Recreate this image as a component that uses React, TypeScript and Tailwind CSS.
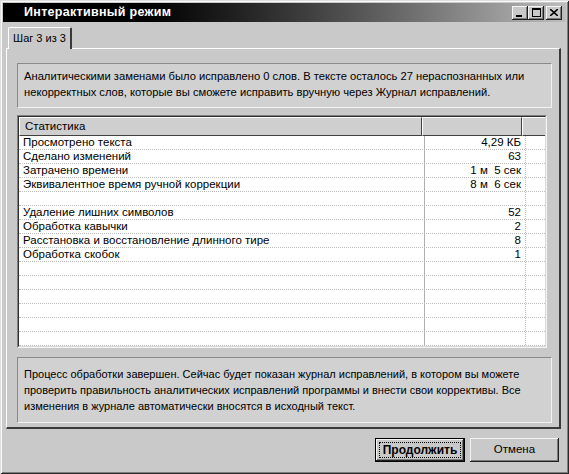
import React from "react";

const rows: [string, string][] = [
  ["Просмотрено текста", "4,29 КБ"],
  ["Сделано изменений", "63"],
  ["Затрачено времени", "1 м  5 сек"],
  ["Эквивалентное время ручной коррекции", "8 м  6 сек"],
  ["", ""],
  ["Удаление лишних символов", "52"],
  ["Обработка кавычки", "2"],
  ["Расстановка и восстановление длинного тире", "8"],
  ["Обработка скобок", "1"],
  ["", ""],
  ["", ""],
  ["", ""],
  ["", ""],
  ["", ""],
  ["", ""],
];

function TitleButton({ children, className = "" }: { children: React.ReactNode; className?: string }) {
  return (
    <div
      className={`w-[16px] h-[14px] bg-[#c9c9c9] flex items-center justify-center shadow-[inset_-1px_-1px_#202020,inset_1px_1px_#f4f4f4,inset_-2px_-2px_#7a7a7a] ${className}`}
    >
      {children}
    </div>
  );
}

export default function App() {
  return (
    <div
      className="w-[569px] h-[474px] bg-[#c9c9c9] p-[3px] flex flex-col shadow-[inset_1px_1px_#dedede,inset_-1px_-1px_#2a2a2a,inset_2px_2px_#fafafa,inset_-2px_-2px_#7d7d7d]"
      style={{ fontFamily: '"Liberation Sans", Arial, sans-serif' }}
    >
      {/* Title bar */}
      <div className="h-[19px] flex items-center bg-linear-to-r from-black from-15% to-[#bdbdbd] pl-[21px] pr-[4px]">
        <span className="text-white font-bold text-[12.5px] leading-none tracking-[0.3px]">Интерактивный режим</span>
        <div className="ml-auto flex items-center">
          <TitleButton>
            <svg width="8" height="8" viewBox="0 0 8 8" className="mt-[1px]">
              <rect x="0" y="6" width="6" height="2" fill="#000" />
            </svg>
          </TitleButton>
          <TitleButton>
            <svg width="9" height="9" viewBox="0 0 9 9">
              <rect x="0.5" y="0.5" width="8" height="8" fill="none" stroke="#000" />
              <rect x="0" y="0" width="9" height="2" fill="#000" />
            </svg>
          </TitleButton>
          <TitleButton className="ml-[2px]">
            <svg width="8" height="7" viewBox="0 0 8 7">
              <path d="M0 0 L8 7 M8 0 L0 7" stroke="#000" strokeWidth="1.6" />
            </svg>
          </TitleButton>
        </div>
      </div>

      {/* Tabs */}
      <div className="mt-[5px] ml-[5px] h-[21px] flex relative z-10">
        <div className="w-[64px] h-[22px] bg-[#c9c9c9] border-t border-l border-white border-r-2 border-r-[#3a3a3a] rounded-t-[2px] flex items-center justify-center text-[11px] text-black">
          Шаг 3 из 3
        </div>
      </div>

      {/* Panel */}
      <div className="ml-[3px] w-[555px] h-[381px] border-t border-l border-white border-r-2 border-b-2 border-r-[#3a3a3a] border-b-[#3a3a3a] flex flex-col">
        {/* Info box 1 */}
        <div className="mt-[14px] ml-[10px] w-[535px] h-[45px] bg-[#d1d1d1] border border-t-[#8a8a8a] border-l-[#8a8a8a] border-r-[#f2f2f2] border-b-[#f2f2f2] pl-[6px] pt-[4px] text-[11.2px] leading-[16px] text-black whitespace-nowrap">
          <div>Аналитическими заменами было исправлено 0 слов. В тексте осталось 27 нераспознанных или</div>
          <div>некорректных слов, которые вы сможете исправить вручную через Журнал исправлений.</div>
        </div>

        {/* Table */}
        <div className="mt-[7px] ml-[10px] w-[530px] h-[233px] border border-t-[#7f7f7f] border-l-[#7f7f7f] border-r-[#f4f4f4] border-b-[#f4f4f4]">
          <div className="w-full h-full bg-white border border-t-[#303030] border-l-[#303030] border-r-[#d8d8d8] border-b-[#d8d8d8] flex flex-col overflow-hidden">
            <div className="h-[19px] flex text-[11.5px] text-black">
              <div className="w-[406px] h-full bg-[#cfcfcf] border-t border-l border-white border-r border-b border-r-[#404040] border-b-[#404040] flex items-center pl-[5px]">
                Статистика
              </div>
              <div className="w-[101px] h-full bg-[#cfcfcf] border-t border-l border-white border-r border-b border-r-[#404040] border-b-[#404040]" />
              <div className="w-[23px] h-full bg-[#cfcfcf] border-t border-l border-white border-b border-b-[#404040]" />
            </div>
            {rows.map(([a, b], i) => (
              <div key={i} className="h-[14px] shrink-0 flex text-[11.5px] leading-[13px] text-black border-b border-dotted border-[#bdbdbd]">
                <div className="w-[406px] h-full border-r border-[#b0b0b0] pl-[4px] whitespace-nowrap">{a}</div>
                <div className="w-[101px] h-full border-r border-dotted border-[#bdbdbd] pr-[4px] text-right whitespace-pre">{b}</div>
                <div className="flex-1" />
              </div>
            ))}
          </div>
        </div>

        {/* Info box 2 */}
        <div className="mt-[9px] ml-[10px] w-[535px] h-[66px] bg-[#d1d1d1] border border-t-[#8a8a8a] border-l-[#8a8a8a] border-r-[#f2f2f2] border-b-[#f2f2f2] pl-[6px] pt-[8px] text-[11px] leading-[16px] text-black whitespace-nowrap">
          <div>Процесс обработки завершен. Сейчас будет показан журнал исправлений, в котором вы можете</div>
          <div>проверить правильность аналитических исправлений программы и внести свои коррективы. Все</div>
          <div>изменения в журнале автоматически вносятся в исходный текст.</div>
        </div>
      </div>

      {/* Buttons */}
      <div className="mt-[9px] flex justify-end pr-[7px] gap-[5px]">
        <div className="w-[90px] h-[24px] border border-black bg-[#c9c9c9] shadow-[inset_-1px_-1px_#202020,inset_1px_1px_#f4f4f4,inset_-2px_-2px_#7a7a7a] flex items-center justify-center p-[3px]">
          <div className="w-full h-full border border-dotted border-black flex items-center justify-center text-[12px] font-bold text-black">
            Продолжить
          </div>
        </div>
        <div className="w-[89px] h-[24px] bg-[#c9c9c9] shadow-[inset_-1px_-1px_#202020,inset_1px_1px_#f4f4f4,inset_-2px_-2px_#7a7a7a] flex items-center justify-center text-[11.5px] text-black">
          Отмена
        </div>
      </div>
    </div>
  );
}
